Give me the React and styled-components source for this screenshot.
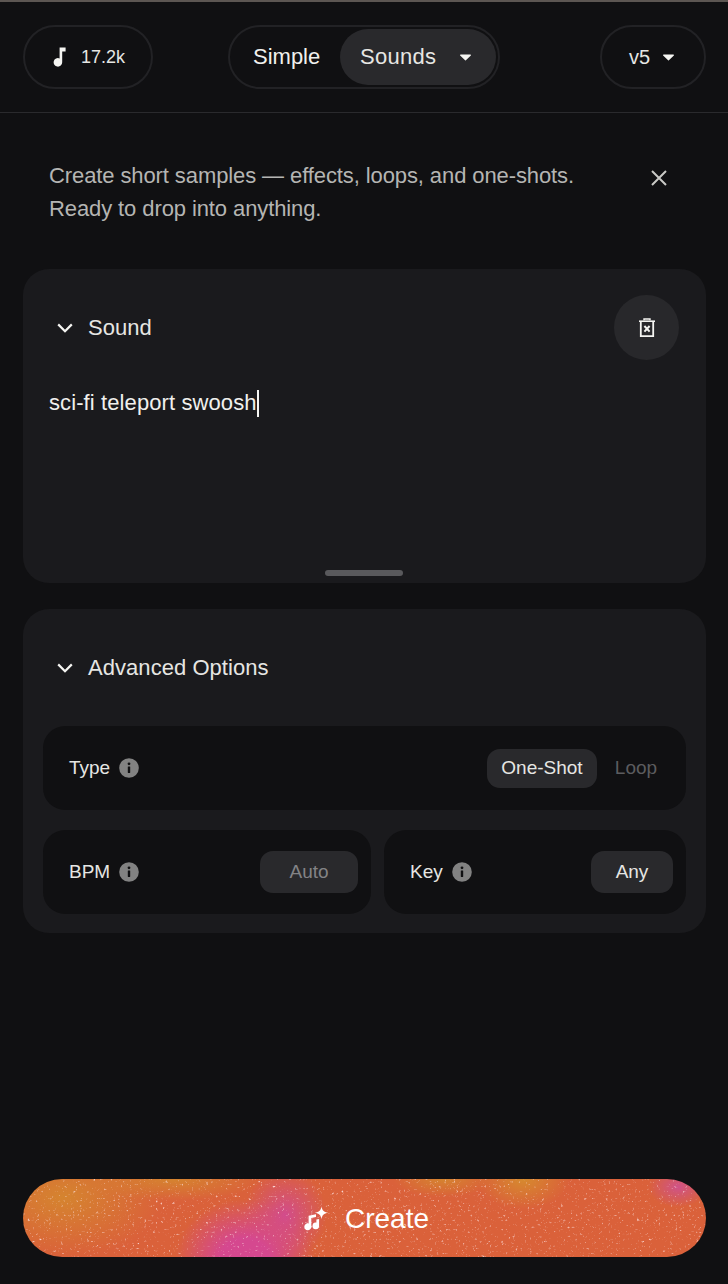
import React from 'react';
import styled, { createGlobalStyle } from 'styled-components';

const GlobalStyle = createGlobalStyle`
    html, body {
        margin: 0;
        padding: 0;
        background: #101012;
    }
    * {
        box-sizing: border-box;
    }
`;

const Chevron = () => (
    <svg width="18" height="18" viewBox="0 0 18 18" fill="none">
        <path d="M2.200 5.400 9 12.200l6.800-6.800" stroke="#f5f5f2" strokeWidth="2.200" />
    </svg>
);

const Caret = () => (
    <svg width="13" height="7" viewBox="0 0 12 7">
        <path d="M1 .6h10a.5.5 0 0 1 .35.85L6.400 6.200a.6.6 0 0 1-.8 0L.65 1.450A.5.5 0 0 1 1 .6z" fill="#f5f5f2" />
    </svg>
);

const Info = () => (
    <svg width="20" height="20" viewBox="0 0 20 20">
        <circle cx="10" cy="10" r="9.800" fill="#828282" />
        <circle cx="10" cy="5.800" r="1.400" fill="#101012" />
        <rect x="8.800" y="8.400" width="2.400" height="6.600" rx=".4" fill="#101012" />
    </svg>
);

const App = () => {
    return (
        <Page>
            <GlobalStyle />
            <Header>
                <OutlinePill $width={130}>
                    <svg width="16" height="22" viewBox="0 0 16 22">
                        <path d="M8.600 1.500h6v3.900h-3.400v10.900a4.300 4.300 0 1 1-2.600-3.900z" fill="#f5f5f2" />
                    </svg>
                    <CreditText>17.2k</CreditText>
                </OutlinePill>
                <ModeSwitch>
                    <ModeLabel>Simple</ModeLabel>
                    <ModeActive>
                        <span>Sounds</span>
                        <Caret />
                    </ModeActive>
                </ModeSwitch>
                <OutlinePill $width={106} $shift={2}>
                    <VersionText>v5</VersionText>
                    <Caret />
                </OutlinePill>
            </Header>

            <Intro>
                <IntroText>
                    Create short samples — effects, loops, and one-shots.
                    <br />
                    Ready to drop into anything.
                </IntroText>
                <CloseButton aria-label="Close">
                    <svg width="18" height="18" viewBox="0 0 18 18" fill="none">
                        <path d="M2 2l14 14M16 2 2 16" stroke="#c9c9c6" strokeWidth="2" />
                    </svg>
                </CloseButton>
            </Intro>

            <SoundCard>
                <CardHead>
                    <CardTitle>
                        <Chevron />
                        <span>Sound</span>
                    </CardTitle>
                    <TrashButton aria-label="Clear">
                        <svg width="18" height="20" viewBox="0 0 18 20" fill="none" stroke="#f5f5f2">
                            <path d="M1 3.200h16" strokeWidth="1.600" />
                            <path d="M6 2.200V1h6v1.200" strokeWidth="1.400" />
                            <path d="M2.800 3.500v14.700h12.400V3.500" strokeWidth="1.800" />
                            <path d="m6.400 8 5.200 5.600m0-5.600-5.200 5.600" strokeWidth="2" />
                        </svg>
                    </TrashButton>
                </CardHead>
                <Prompt>
                    sci-fi teleport swoosh<Cursor />
                </Prompt>
                <DragHandle />
            </SoundCard>

            <OptionsCard>
                <OptionsHead>
                    <CardTitle>
                        <Chevron />
                        <span>Advanced Options</span>
                    </CardTitle>
                </OptionsHead>
                <OptionsGrid>
                    <TypeRow>
                        <OptionLabel>
                            Type <Info />
                        </OptionLabel>
                        <Segments>
                            <Segment $active>One-Shot</Segment>
                            <Segment>Loop</Segment>
                        </Segments>
                    </TypeRow>
                    <BottomOptions>
                        <OptionCell>
                            <OptionLabel>
                                BPM <Info />
                            </OptionLabel>
                            <ValueButton $width={98} $muted>Auto</ValueButton>
                        </OptionCell>
                        <OptionCell>
                            <OptionLabel>
                                Key <Info />
                            </OptionLabel>
                            <ValueButton $width={82}>Any</ValueButton>
                        </OptionCell>
                    </BottomOptions>
                </OptionsGrid>
            </OptionsCard>

            <Footer>
                <CreateButton>
                    <Grain aria-hidden="true">
                        <filter id="speckle" x="0" y="0" width="100%" height="100%">
                            <feTurbulence type="fractalNoise" baseFrequency="0.42" numOctaves="2" seed="11" />
                            <feColorMatrix
                                type="matrix"
                                values="0 0 0 0 1  0 0 0 0 0.78  0 0 0 0 0.78  1.800 1.800 0 0 -2.150"
                            />
                        </filter>
                        <rect width="100%" height="100%" filter="url(#speckle)" />
                    </Grain>
                    <CreateInner>
                        <svg width="26" height="26" viewBox="0 0 26 26">
                            <path
                                d="M5.600 9.800 13 8.200v2.800l-4.700 1v8.800a3.500 3.500 0 1 1-2.700-3.400zM13.400 13.600l2.700-.6v6.800a3.300 3.300 0 1 1-2.700-3.200z"
                                fill="#fff"
                            />
                            <path d="M18.500.3c.5 4 2.300 5.800 6.800 6.500-4.500.7-6.300 2.500-6.800 6.500-.5-4-2.300-5.800-6.800-6.500 4.500-.7 6.300-2.500 6.800-6.500z" fill="#fff" />
                        </svg>
                        <span>Create</span>
                    </CreateInner>
                </CreateButton>
            </Footer>
        </Page>
    );
};

export default App;

const Page = styled.div`
    display: flex;
    flex-direction: column;
    width: 728px;
    height: 1284px;
    overflow: hidden;
    background: #101012;
    border-top: 2px solid #5c5652;
    font-family: 'Liberation Sans', Arial, sans-serif;
    color: #f5f5f2;
`;

const Header = styled.header`
    display: flex;
    align-items: center;
    height: 111px;
    padding: 0 22px 0 23px;
    border-bottom: 1px solid #2a2a2d;
`;

const OutlinePill = styled.div`
    display: flex;
    align-items: center;
    justify-content: center;
    gap: 12px;
    width: ${props => props.$width}px;
    height: 64px;
    padding-right: ${props => props.$shift || 0}px;
    border: 2px solid #222225;
    border-radius: 32px;
`;

const CreditText = styled.span`
    font-size: 18px;
    margin-left: 2px;
    color: #e6e6e3;
`;

const VersionText = styled.span`
    font-size: 20px;
    color: #e6e6e3;
`;

const ModeSwitch = styled.div`
    display: flex;
    align-items: center;
    width: 272px;
    height: 64px;
    margin: 0 100px 0 75px;
    padding: 0 2px 0 23px;
    border: 2px solid #222225;
    border-radius: 32px;
`;

const ModeLabel = styled.span`
    font-size: 22px;
    color: #f0f0ed;
    width: 87px;
`;

const ModeActive = styled.div`
    display: flex;
    align-items: center;
    justify-content: space-between;
    width: 156px;
    height: 56px;
    padding: 0 24px 0 20px;
    border-radius: 28px;
    background: #29292c;
    font-size: 22px;
    letter-spacing: 0.3px;
    color: #e6e6e3;
`;

const Intro = styled.section`
    display: flex;
    align-items: flex-start;
    justify-content: space-between;
    padding: 46px 60px 0 49px;
    height: 156px;
`;

const IntroText = styled.p`
    margin: 0;
    font-size: 22px;
    line-height: 33px;
    letter-spacing: -0.1px;
    color: #b5b5b3;
`;

const CloseButton = styled.div`
    display: flex;
    margin-top: 10px;
`;

const Card = styled.section`
    width: 683px;
    margin-left: 23px;
    background: #1a1a1d;
    border-radius: 26px;
`;

const SoundCard = styled(Card)`
    position: relative;
    height: 314px;
    padding: 26px 27px 0 26px;
`;

const CardHead = styled.div`
    display: flex;
    align-items: center;
    justify-content: space-between;
    height: 65px;
`;

const CardTitle = styled.div`
    display: flex;
    align-items: center;
    gap: 14px;
    padding-left: 7px;
    font-size: 22px;
    letter-spacing: 0.05px;
    color: #e6e6e3;
`;

const TrashButton = styled.div`
    display: flex;
    align-items: center;
    justify-content: center;
    width: 65px;
    height: 65px;
    border-radius: 50%;
    background: #28282b;
`;

const Prompt = styled.div`
    display: flex;
    align-items: center;
    margin-top: 29px;
    font-size: 22px;
    line-height: 28px;
    letter-spacing: 0.1px;
    color: #f0f0ed;
`;

const Cursor = styled.span`
    display: inline-block;
    width: 2px;
    height: 27px;
    background: #f5f5f2;
`;

const DragHandle = styled.div`
    position: absolute;
    left: 302px;
    bottom: 7px;
    width: 78px;
    height: 6px;
    border-radius: 3px;
    background: #59595c;
`;

const OptionsCard = styled(Card)`
    height: 324px;
    margin-top: 26px;
    padding: 0 20px;
`;

const OptionsHead = styled.div`
    display: flex;
    align-items: center;
    height: 117px;
    padding-left: 6px;
`;

const OptionsGrid = styled.div`
    display: flex;
    flex-direction: column;
    gap: 20px;
`;

const TypeRow = styled.div`
    display: flex;
    align-items: center;
    justify-content: space-between;
    height: 84px;
    padding: 0 15px 0 26px;
    border-radius: 22px;
    background: #101012;
`;

const BottomOptions = styled.div`
    display: grid;
    grid-template-columns: 328px 302px;
    gap: 13px;
`;

const OptionCell = styled.div`
    display: flex;
    align-items: center;
    justify-content: space-between;
    height: 84px;
    padding: 0 13px 0 26px;
    border-radius: 22px;
    background: #101012;
`;

const OptionLabel = styled.div`
    display: flex;
    align-items: center;
    gap: 9px;
    font-size: 19px;
    color: #e6e6e3;
`;

const Segments = styled.div`
    display: flex;
    align-items: center;
    gap: 4px;
`;

const Segment = styled.div`
    display: flex;
    align-items: center;
    justify-content: center;
    width: ${props => (props.$active ? '110px' : '70px')};
    height: 39px;
    border-radius: 13px;
    font-size: 19px;
    color: ${props => (props.$active ? '#e6e6e3' : '#5c5c5f')};
    background: ${props => (props.$active ? '#29292c' : 'transparent')};
`;

const ValueButton = styled.div`
    display: flex;
    align-items: center;
    justify-content: center;
    width: ${props => props.$width}px;
    height: 42px;
    border-radius: 13px;
    font-size: 19px;
    color: ${props => (props.$muted ? '#838386' : '#e6e6e3')};
    background: #29292c;
`;

const Footer = styled.footer`
    margin-top: auto;
    padding: 0 22px 27px 23px;
`;

const CreateButton = styled.div`
    position: relative;
    height: 78px;
    border-radius: 39px;
    overflow: hidden;
    background:
        radial-gradient(ellipse 70px 60px at 222px 80px, #d5488f 0%, #d5488f 35%, rgba(213, 72, 143, 0) 100%),
        radial-gradient(ellipse 42px 46px at 262px 36px, #d24c8c 0%, rgba(210, 76, 140, 0) 100%),
        radial-gradient(ellipse 100px 60px at 40px 18px, #d5842f 0%, rgba(213, 132, 47, 0) 100%),
        radial-gradient(ellipse 90px 22px at 150px 0, #d5842f 0%, rgba(213, 132, 47, 0) 100%),
        radial-gradient(ellipse 46px 30px at 500px 0, #d68a2e 0%, rgba(214, 138, 46, 0) 100%),
        radial-gradient(ellipse 50px 18px at 420px 0, #d5842f 0%, rgba(213, 132, 47, 0) 100%),
        radial-gradient(ellipse 30px 20px at 655px 8px, #cf5288 0%, rgba(207, 82, 136, 0) 100%),
        #da613a;
`;

const Grain = styled.svg`
    position: absolute;
    inset: 0;
    width: 100%;
    height: 100%;
`;

const CreateInner = styled.div`
    position: relative;
    top: 1px;
    display: flex;
    align-items: center;
    justify-content: center;
    gap: 16px;
    height: 100%;
    padding-left: 3px;
    font-size: 28px;
    color: #fff;
`;
